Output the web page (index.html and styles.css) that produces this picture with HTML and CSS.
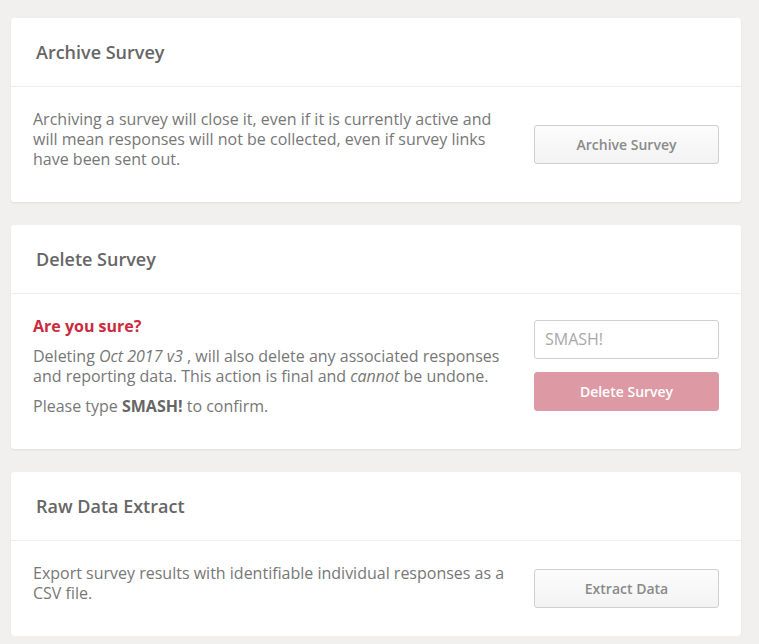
FILE: index.html
```html
<!DOCTYPE html>
<html>
<head>
<meta charset="utf-8">
<link rel="stylesheet" href="styles.css">
</head>
<body>
<div class="page">
  <section class="card">
    <header class="card-head"><h2>Archive Survey</h2></header>
    <div class="card-body">
      <div class="info">
        <p>Archiving a survey will close it, even if it is currently active and will mean responses will not be collected, even if survey links have been sent out.</p>
      </div>
      <div class="actions">
        <button class="btn">Archive Survey</button>
      </div>
    </div>
  </section>

  <section class="card">
    <header class="card-head"><h2>Delete Survey</h2></header>
    <div class="card-body">
      <div class="info">
        <p class="warn">Are you sure?</p>
        <p>Deleting <em>Oct 2017 v3</em> , will also delete any associated responses and reporting data. This action is final and <em>cannot</em> be undone.</p>
        <p>Please type <strong>SMASH!</strong> to confirm.</p>
      </div>
      <div class="actions actions-stack">
        <input class="field" type="text" placeholder="SMASH!">
        <button class="btn btn-danger">Delete Survey</button>
      </div>
    </div>
  </section>

  <section class="card">
    <header class="card-head"><h2>Raw Data Extract</h2></header>
    <div class="card-body">
      <div class="info">
        <p>Export survey results with identifiable individual responses as a CSV file.</p>
      </div>
      <div class="actions">
        <button class="btn">Extract Data</button>
      </div>
    </div>
  </section>
</div>
</body>
</html>
```

FILE: styles.css
```css
* { box-sizing: border-box; }
html, body {
  margin: 0;
  padding: 0;
  background: #f1f0ee;
  font-family: "Open Sans", "Liberation Sans", sans-serif;
  color: #777;
}
.page {
  display: flex;
  flex-direction: column;
  gap: 23px;
  padding: 18px 0 0 11px;
  width: 741px;
}
.card {
  background: #fff;
  border-radius: 3px;
  box-shadow: 0 1px 2px rgba(0,0,0,0.08);
}
.card-head {
  border-bottom: 1px solid #eeeeee;
  padding: 21px 25px 21px 25px;
  height: 69px;
}
.card-head h2 {
  margin: 0;
  font-size: 18px;
  line-height: 25px;
  padding-top: 1px;
  font-weight: 600;
  color: #666;
}
.card-body {
  display: flex;
  align-items: center;
  gap: 24px;
  padding: 22px 22px 23px 22px;
}
.info { flex: 1; }
.info p {
  margin: 0 0 10px 0;
  font-size: 16px;
  line-height: 20px;
}
.info em { font-style: italic; }
.info strong { font-weight: 700; color: #666; }
.info .warn {
  color: #cc2a3d;
  font-weight: 700;
}
.actions {
  width: 185px;
  flex: none;
  display: flex;
  flex-direction: column;
}
.actions-stack {
  gap: 13px;
  padding-bottom: 12px;
}
.btn {
  width: 185px;
  height: 39px;
  border: 1px solid #cfcfcf;
  border-radius: 3px;
  background: linear-gradient(#fcfcfc, #f3f3f3);
  font-family: "Open Sans", "Liberation Sans", sans-serif;
  font-size: 14px;
  font-weight: 600;
  color: #8a8a8a;
  padding: 0;
}
.btn-danger {
  background: #de9aa4;
  border-color: #de9aa4;
  color: #fff;
}
.field {
  width: 185px;
  height: 39px;
  border: 1px solid #cfcfcf;
  border-radius: 3px;
  padding: 0 10px;
  font-family: "Open Sans", "Liberation Sans", sans-serif;
  font-size: 16px;
  color: #777;
}
.field::placeholder { color: #a8a8a8; }
```
